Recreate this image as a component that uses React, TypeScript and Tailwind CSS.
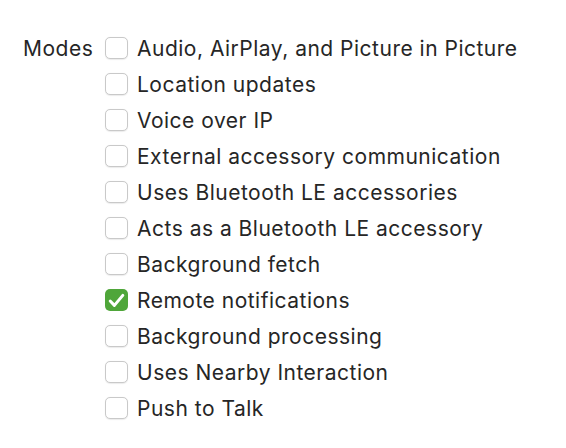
const MODES: { label: string; checked?: boolean }[] = [
  { label: "Audio, AirPlay, and Picture in Picture" },
  { label: "Location updates" },
  { label: "Voice over IP" },
  { label: "External accessory communication" },
  { label: "Uses Bluetooth LE accessories" },
  { label: "Acts as a Bluetooth LE accessory" },
  { label: "Background fetch" },
  { label: "Remote notifications", checked: true },
  { label: "Background processing" },
  { label: "Uses Nearby Interaction" },
  { label: "Push to Talk" },
];

function Checkbox({ checked }: { checked?: boolean }) {
  if (checked) {
    return (
      <div className="w-[23px] h-[22px] rounded-[5px] bg-[#4fa63a] flex items-center justify-center shrink-0">
        <svg width="17" height="15" viewBox="0 0 17 15" fill="none">
          <path
            d="M2.2 8 L6.4 12.4 L14.8 2.4"
            stroke="white"
            strokeWidth="3"
            strokeLinecap="round"
            strokeLinejoin="round"
          />
        </svg>
      </div>
    );
  }
  return (
    <div className="w-[23px] h-[22px] rounded-[5px] border border-[#c9c9c9] bg-white shadow-[0_0.5px_1px_rgba(0,0,0,0.08)] shrink-0" />
  );
}

export default function App() {
  return (
    <div
      className="w-[566px] h-[448px] bg-white text-[#262626] text-[21px] tracking-[0.5px]"
      style={{ fontFamily: "Inter, 'Noto Sans', sans-serif" }}
    >
      <div className="flex pt-[34px]">
        <div className="w-[105px] pl-[23px] h-[28px] leading-[28px] pt-[1px] pr-2">Modes</div>
        <div className="flex flex-col gap-[8px]">
          {MODES.map((m) => (
            <div key={m.label} className="flex items-center gap-[9px] h-[28px]">
              <Checkbox checked={m.checked} />
              <span className="leading-[28px] mt-[2px] whitespace-nowrap">{m.label}</span>
            </div>
          ))}
        </div>
      </div>
    </div>
  );
}
